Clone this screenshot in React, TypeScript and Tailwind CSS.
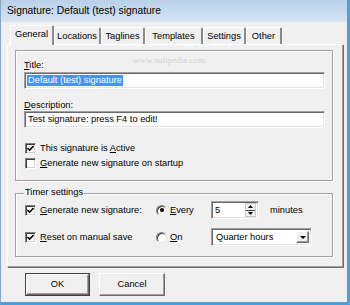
import React from "react";

function Ul({ children }: { children: React.ReactNode }) {
  return <span className="underline underline-offset-[1px] decoration-[1px]">{children}</span>;
}

function Check({ checked }: { checked?: boolean }) {
  return (
    <span className="w-[11px] h-[11px] shrink-0 flex items-center justify-center bg-white border border-t-[#808080] border-l-[#808080] border-r-white border-b-white shadow-[inset_1px_1px_0_#404040,inset_-1px_-1px_0_#d4d0c8]">
      {checked && (
        <svg width="7" height="7" viewBox="0 0 7 7">
          <path d="M0.5 3 L2.6 5.2 L6.5 1" fill="none" stroke="#000" strokeWidth="1.6" />
        </svg>
      )}
    </span>
  );
}

function Radio({ checked }: { checked?: boolean }) {
  return (
    <span className="w-[11px] h-[11px] shrink-0 rounded-full flex items-center justify-center bg-white border border-t-[#808080] border-l-[#808080] border-r-[#e8e8e8] border-b-[#e8e8e8] shadow-[inset_1px_1px_0_#404040]">
      {checked && <span className="w-[4px] h-[4px] rounded-full bg-black" />}
    </span>
  );
}

function Tab({ label, width, selected }: { label: string; width: string; selected?: boolean }) {
  if (selected) {
    return (
      <div className={`${width} h-[20px] flex items-start justify-center pt-[3px] bg-[#f0f0f0] border-l border-t border-white border-r-2 border-r-[#8a8a8a] rounded-t-[2px]`}>
        {label}
      </div>
    );
  }
  return (
    <div className={`${width} h-[17px] mb-[1px] flex items-center justify-center bg-[#f0f0f0] border-l border-t border-white border-r-2 border-r-[#8a8a8a] rounded-t-[2px]`}>
      {label}
    </div>
  );
}

const sunken =
  "bg-white border border-t-[#a0a0a0] border-l-[#a0a0a0] border-r-white border-b-white shadow-[inset_1px_1px_0_#696969,inset_-1px_-1px_0_#e3e3e3]";
const groupBox =
  "border border-[#a0a0a0] shadow-[inset_1px_1px_0_#fff,1px_1px_0_#fff]";
const raised =
  "bg-[#f0f0f0] border border-t-white border-l-white border-r-[#696969] border-b-[#696969] shadow-[inset_-1px_-1px_0_#a0a0a0]";

export default function App() {
  return (
    <div className="w-[350px] h-[305px] relative overflow-hidden flex flex-col bg-[#f0f0f0] text-black text-[9.3px] leading-[11px] font-['Liberation_Sans',Arial,sans-serif] border-l border-l-[#8aa6c6] border-r-[3px] border-r-[#4a9fdc] border-b-[3px] border-b-[#4a9fdc]">
      {/* title bar */}
      <div className="h-[22px] shrink-0 flex items-center pl-[6px] pb-[1px] text-[10.3px] bg-gradient-to-b from-[#b9d1ea] to-[#d6e4f3]">
        Signature: Default (test) signature
      </div>

      {/* tabs */}
      <div className="flex items-end h-[20px] mt-[3px] -mb-[1px] ml-[9px] relative z-10">
        <Tab label="General" width="w-[44px]" selected />
        <Tab label="Locations" width="w-[47px]" />
        <Tab label="Taglines" width="w-[44px]" />
        <Tab label="Templates" width="w-[58px]" />
        <Tab label="Settings" width="w-[43px]" />
        <Tab label="Other" width="w-[36px]" />
      </div>

      {/* tab panel */}
      <div className="ml-[6px] w-[336px] h-[223px] shrink-0 pl-[7px] pt-[5px] border-l border-t border-white border-r border-b border-r-[#a0a0a0] border-b-[#a0a0a0] shadow-[1px_1px_0_#696969]">
        <div className={`w-[318px] h-[131px] pl-[8px] pt-[9px] ${groupBox}`}>
          <div>
            <Ul>T</Ul>itle:
          </div>
          <div className={`mt-[1px] w-[301px] h-[17px] flex items-center pl-[2px] ${sunken}`}>
            <span className="bg-[#3399ff] text-white px-[1px]">Default (test) signature</span>
          </div>
          <div className="mt-[11px]">
            <Ul>D</Ul>escription:
          </div>
          <div className={`mt-[0px] w-[301px] h-[17px] flex items-center pl-[3px] ${sunken}`}>
            Test signature: press F4 to edit!
          </div>
          <div className="mt-[14px] h-[13px] flex items-center gap-[4px] pl-[1px]">
            <Check checked />
            <span>
              This signature is <Ul>A</Ul>ctive
            </span>
          </div>
          <div className="mt-[2px] h-[13px] flex items-center gap-[4px] pl-[1px]">
            <Check />
            <span>
              <Ul>G</Ul>enerate new signature on startup
            </span>
          </div>
        </div>

        <div className={`relative mt-[12px] w-[318px] h-[64px] pl-[9px] pt-[7px] ${groupBox}`}>
          <span className="absolute left-[8px] -top-[7px] px-[1px] bg-[#f0f0f0]">Timer settings</span>
          <div className="h-[18px] flex items-center">
            <div className="w-[131px] flex items-center gap-[4px]">
              <Check checked />
              <span>
                <Ul>G</Ul>enerate new signature:
              </span>
            </div>
            <div className="w-[55px] flex items-center gap-[3px]">
              <Radio checked />
              <span>
                <Ul>E</Ul>very
              </span>
            </div>
            <div className={`w-[48px] h-[18px] flex items-center justify-between pl-[3px] pr-[2px] ${sunken}`}>
              <span>5</span>
              <div className="w-[11px] h-[14px] flex flex-col bg-[#f0f0f0] border border-[#c8c8c8]">
                <div className="flex-1 flex items-center justify-center border-b border-[#404040]">
                  <svg width="5" height="3" viewBox="0 0 5 3">
                    <path d="M0 3 L2.5 0 L5 3 Z" fill="#000" />
                  </svg>
                </div>
                <div className="flex-1 flex items-center justify-center">
                  <svg width="5" height="3" viewBox="0 0 5 3">
                    <path d="M0 0 L2.5 3 L5 0 Z" fill="#000" />
                  </svg>
                </div>
              </div>
            </div>
            <span className="ml-[11px]">minutes</span>
          </div>
          <div className="mt-[9px] h-[18px] flex items-center">
            <div className="w-[131px] flex items-center gap-[4px]">
              <Check checked />
              <span>
                <Ul>R</Ul>eset on manual save
              </span>
            </div>
            <div className="w-[55px] flex items-center gap-[3px]">
              <Radio />
              <span>
                <Ul>O</Ul>n
              </span>
            </div>
            <div className={`w-[101px] h-[18px] flex items-center justify-between pl-[4px] pr-[2px] ${sunken}`}>
              <span>Quarter hours</span>
              <div className={`w-[13px] h-[12px] flex items-center justify-center ${raised}`}>
                <svg width="6" height="3" viewBox="0 0 6 3">
                  <path d="M0 0 L3 3 L6 0 Z" fill="#000" />
                </svg>
              </div>
            </div>
          </div>
        </div>
      </div>

      {/* buttons */}
      <div className="mt-[6px] ml-[24px] flex gap-[9px]">
        <div className="w-[65px] h-[23px] border border-[#404040]">
          <div className={`w-full h-full flex items-center justify-center ${raised}`}>OK</div>
        </div>
        <div className={`w-[66px] h-[23px] flex items-center justify-center ${raised}`}>Cancel</div>
      </div>

      {/* watermark */}
      <div className="absolute left-[119px] top-[31px] pointer-events-none text-[17px] leading-[20px] tracking-[2px] text-white/60 font-['DejaVu_Sans',sans-serif]">
        SOFTPEDIA
      </div>
      <div className="absolute left-[132px] top-[55px] pointer-events-none text-[9px] leading-[10px] text-[#d2d2d2] font-['Liberation_Serif',serif]">
        www.softpedia.com
      </div>
    </div>
  );
}
